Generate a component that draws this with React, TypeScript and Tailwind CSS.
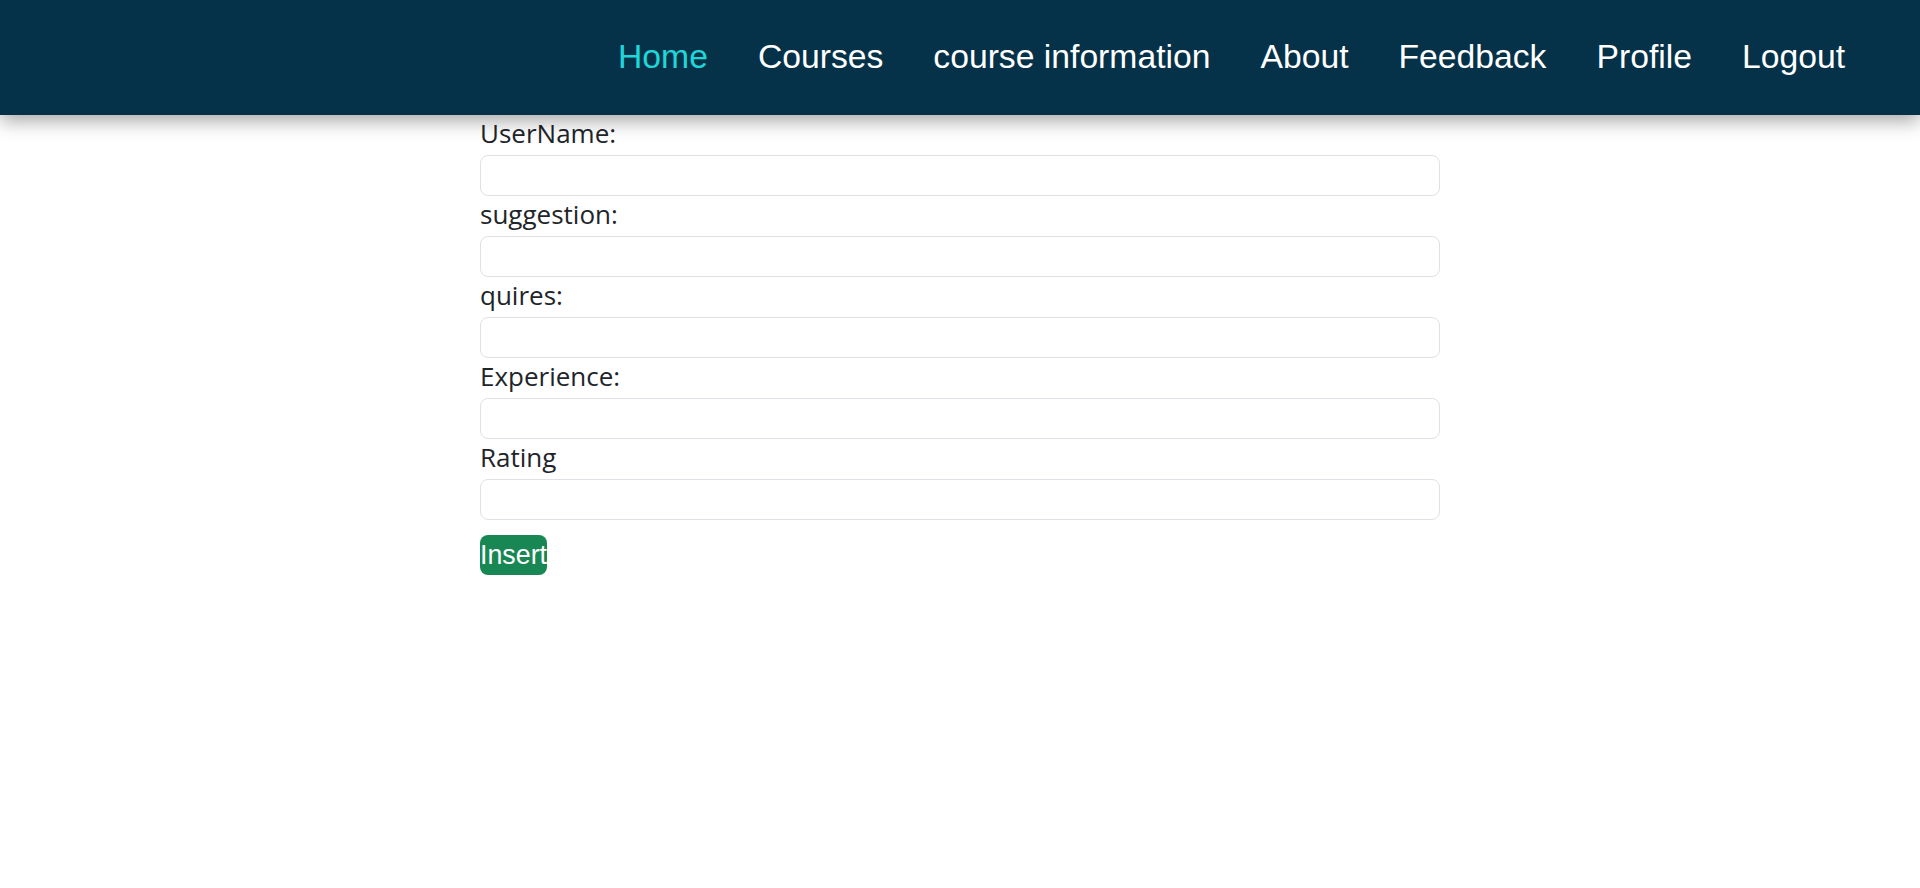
const links = ["Home", "Courses", "course information", "About", "Feedback", "Profile", "Logout"];

const fields = ["UserName:", "suggestion:", "quires:", "Experience:", "Rating"];

export default function App() {
  return (
    <div className="min-h-[888px] bg-white">
      <header className="relative z-10 h-[115px] bg-[#053248] shadow-[0_6px_18px_rgba(0,0,0,0.35)] flex items-center justify-end pr-[75px] pb-[2px]">
        <nav className="flex items-center gap-[50px] font-['Liberation_Sans',Arial,sans-serif] text-[33.7px] leading-none">
          {links.map((l, i) => (
            <a
              key={l}
              href="#"
              className={i === 0 ? "text-[#1fd6d9]" : "text-white"}
            >
              {l}
            </a>
          ))}
        </nav>
      </header>

      <form className="w-[960px] mx-auto flex flex-col">
        {fields.map((f) => (
          <div key={f} className="flex flex-col">
            <label className="font-['Open_Sans','Noto_Sans',sans-serif] text-[26px] leading-[39.5px] text-[#212529] -mt-[1px] mb-[1px]">
              {f}
            </label>
            <input
              type="text"
              className="h-[41.5px] w-full rounded-[8px] border border-[#dee2e6] bg-white outline-none"
            />
          </div>
        ))}
        <div className="mt-[15px]">
          <button
            type="button"
            className="h-[40px] rounded-[8px] bg-[#198754] text-white font-['Liberation_Sans',Arial,sans-serif] text-[26.8px] leading-none px-0"
          >
            Insert
          </button>
        </div>
      </form>
    </div>
  );
}
